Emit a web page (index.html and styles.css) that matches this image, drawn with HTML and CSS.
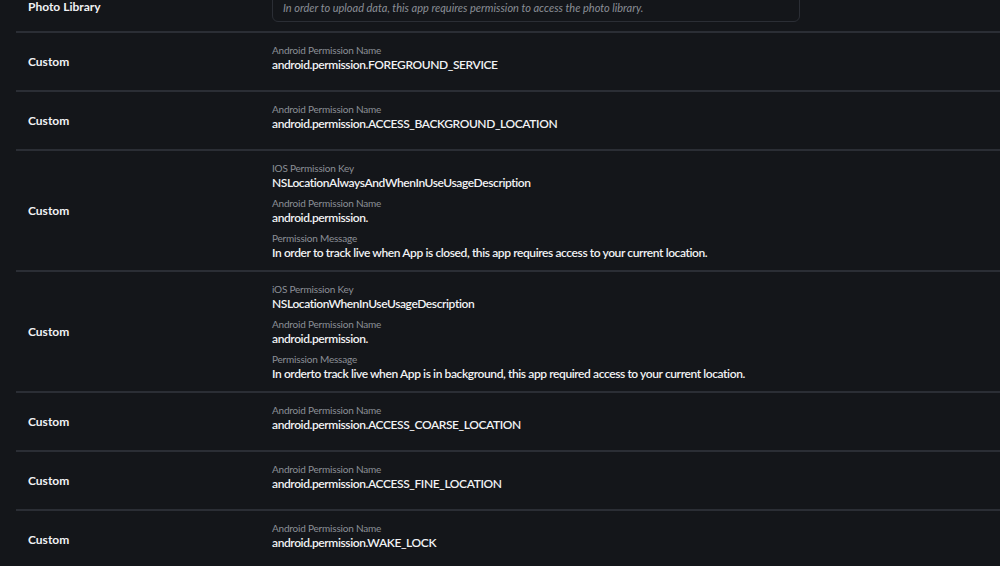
FILE: index.html
```html
<!DOCTYPE html>
<html lang="en">
<head>
  <meta charset="UTF-8" />
  <meta name="viewport" content="width=device-width, initial-scale=1.0" />
  <title>Permissions</title>
  <link rel="stylesheet" href="styles.css">
</head>
<body>
  <div class="perm-list">
    <div class="perm-row first">
      <div class="perm-type">Photo Library</div>
      <div class="perm-fields">
        <div class="perm-input">In order to upload data, this app requires permission to access the photo library.</div>
      </div>
    </div>

    <div class="perm-row">
      <div class="perm-type">Custom</div>
      <div class="perm-fields">
        <div class="field">
          <div class="field-label">Android Permission Name</div>
          <div class="field-value">android.permission.FOREGROUND_SERVICE</div>
        </div>
      </div>
    </div>

    <div class="perm-row">
      <div class="perm-type">Custom</div>
      <div class="perm-fields">
        <div class="field">
          <div class="field-label">Android Permission Name</div>
          <div class="field-value">android.permission.ACCESS_BACKGROUND_LOCATION</div>
        </div>
      </div>
    </div>

    <div class="perm-row">
      <div class="perm-type">Custom</div>
      <div class="perm-fields">
        <div class="field">
          <div class="field-label">IOS Permission Key</div>
          <div class="field-value">NSLocationAlwaysAndWhenInUseUsageDescription</div>
        </div>
        <div class="field">
          <div class="field-label">Android Permission Name</div>
          <div class="field-value">android.permission.</div>
        </div>
        <div class="field">
          <div class="field-label">Permission Message</div>
          <div class="field-value">In order to track live when App is closed, this app requires access to your current location.</div>
        </div>
      </div>
    </div>

    <div class="perm-row">
      <div class="perm-type">Custom</div>
      <div class="perm-fields">
        <div class="field">
          <div class="field-label">iOS Permission Key</div>
          <div class="field-value">NSLocationWhenInUseUsageDescription</div>
        </div>
        <div class="field">
          <div class="field-label">Android Permission Name</div>
          <div class="field-value">android.permission.</div>
        </div>
        <div class="field">
          <div class="field-label">Permission Message</div>
          <div class="field-value">In orderto track live when App is in background, this app required access to your current location.</div>
        </div>
      </div>
    </div>

    <div class="perm-row">
      <div class="perm-type">Custom</div>
      <div class="perm-fields">
        <div class="field">
          <div class="field-label">Android Permission Name</div>
          <div class="field-value">android.permission.ACCESS_COARSE_LOCATION</div>
        </div>
      </div>
    </div>

    <div class="perm-row">
      <div class="perm-type">Custom</div>
      <div class="perm-fields">
        <div class="field">
          <div class="field-label">Android Permission Name</div>
          <div class="field-value">android.permission.ACCESS_FINE_LOCATION</div>
        </div>
      </div>
    </div>

    <div class="perm-row">
      <div class="perm-type">Custom</div>
      <div class="perm-fields">
        <div class="field">
          <div class="field-label">Android Permission Name</div>
          <div class="field-value">android.permission.WAKE_LOCK</div>
        </div>
      </div>
    </div>
  </div>
</body>
</html>
```

FILE: styles.css
```css
* {
  box-sizing: border-box;
  margin: 0;
  padding: 0;
}
html, body {
  height: 100%;
  overflow: hidden;
}
body {
  font-family: 'Lato', 'Roboto', sans-serif;
  background: #14161a;
  color: #f1f2f4;
}
.perm-list {
  margin-left: 16px;
  margin-top: -15px;
}
.perm-row {
  display: flex;
  align-items: center;
  border-bottom: 2px solid #2b2e35;
  padding: 11px 0 10px;
  min-height: 59px;
}
.perm-row.first {
  min-height: 0;
  padding: 8px 0 9px;
}
.perm-type {
  width: 256px;
  flex-shrink: 0;
  padding-left: 12px;
  padding-bottom: 2px;
  font-size: 12px;
  font-weight: 700;
}
.perm-fields {
  flex: 1;
  align-self: flex-start;
  display: flex;
  flex-direction: column;
  gap: 4px;
}
.perm-row.first .perm-fields {
  align-self: center;
}
.perm-input {
  width: 528px;
  height: 29px;
  padding: 0 10px;
  display: flex;
  align-items: center;
  border: 1px solid #2b2e35;
  border-radius: 6px;
  font-size: 11px;
  font-style: italic;
  color: #8a8e96;
}
.field-label {
  font-size: 10px;
  line-height: 13px;
  letter-spacing: -0.2px;
  color: #8b8f97;
}
.field-value {
  font-size: 12px;
  line-height: 15px;
  letter-spacing: -0.4px;
  font-weight: 600;
}
.field + .field {
  margin-top: 3px;
}
```
